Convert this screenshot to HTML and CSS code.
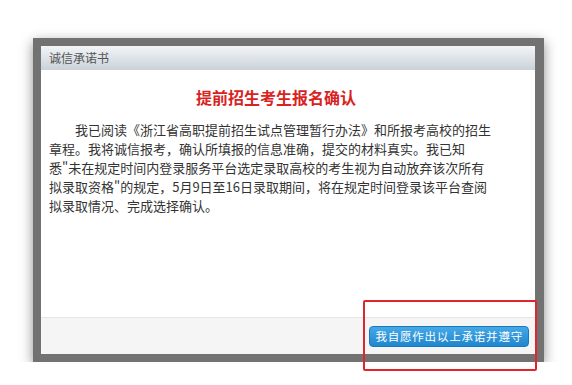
FILE: index.html
```html
<!DOCTYPE html>
<html lang="zh-CN">
<head>
  <meta charset="UTF-8">
  <title>诚信承诺书</title>
  <link rel="stylesheet" href="styles.css">
</head>
<body>
  <div class="dialog">
    <div class="dialog-title">诚信承诺书</div>
    <div class="dialog-body">
      <h1 class="heading">提前招生考生报名确认</h1>
      <p class="pledge">我已阅读《浙江省高职提前招生试点管理暂行办法》和所报考高校的招生<br>章程。我将诚信报考，确认所填报的信息准确，提交的材料真实。我已知<br>悉"未在规定时间内登录服务平台选定录取高校的考生视为自动放弃该次所有<br>拟录取资格"的规定，5月9日至16日录取期间，将在规定时间登录该平台查阅<br>拟录取情况、完成选择确认。</p>
    </div>
    <div class="dialog-footer">
      <button class="btn-confirm">我自愿作出以上承诺并遵守</button>
    </div>
  </div>

  <!-- annotation box round the button -->
  <div class="mark"></div>
</body>
</html>
```

FILE: styles.css
```css
body { margin: 0; background: #fff; font-family: "Microsoft YaHei", "Noto Sans CJK SC", sans-serif; color: #333; }
.dialog { margin: 38px 0 0 33px; width: 494px; border-style: solid; border-color: #727272; border-width: 8px 9px 8px 8px; box-shadow: 0 4px 12px rgba(0, 0, 0, 0.45); background: #fff; }
.dialog-title { height: 24px; line-height: 24px; padding-left: 8px; font-size: 12px; color: #555; background: linear-gradient(#f3f5f7, #c9d1d9); }
.dialog-body { height: 247px; padding: 0 20px 0 8px; }
.heading { margin: 0; padding-top: 16px; padding-right: 12px; font-size: 16px; line-height: 22px; color: #d8231f; text-align: center; }
.pledge { margin: 12px 0 0; font-size: 13px; line-height: 19px; text-indent: 2em; color: #333; white-space: nowrap; }
.dialog-footer { border-top: 1px solid #e6e6e6; background: #f5f5f5; display: flex; justify-content: flex-end; align-items: flex-start; padding: 8px 6px 0 0; box-sizing: border-box; height: 37px; }
.btn-confirm { height: 21px; padding: 0 5px; border: 1px solid #1b78bf; border-radius: 4px; background: linear-gradient(#45a9e6, #1f86cf); color: #fff; font-family: inherit; font-size: 11.5px; letter-spacing: 0.8px; line-height: 19px; }
.mark { position: absolute; left: 363px; top: 300px; width: 170px; height: 67px; border: 2px solid #e0262a; border-radius: 2px; }
```
